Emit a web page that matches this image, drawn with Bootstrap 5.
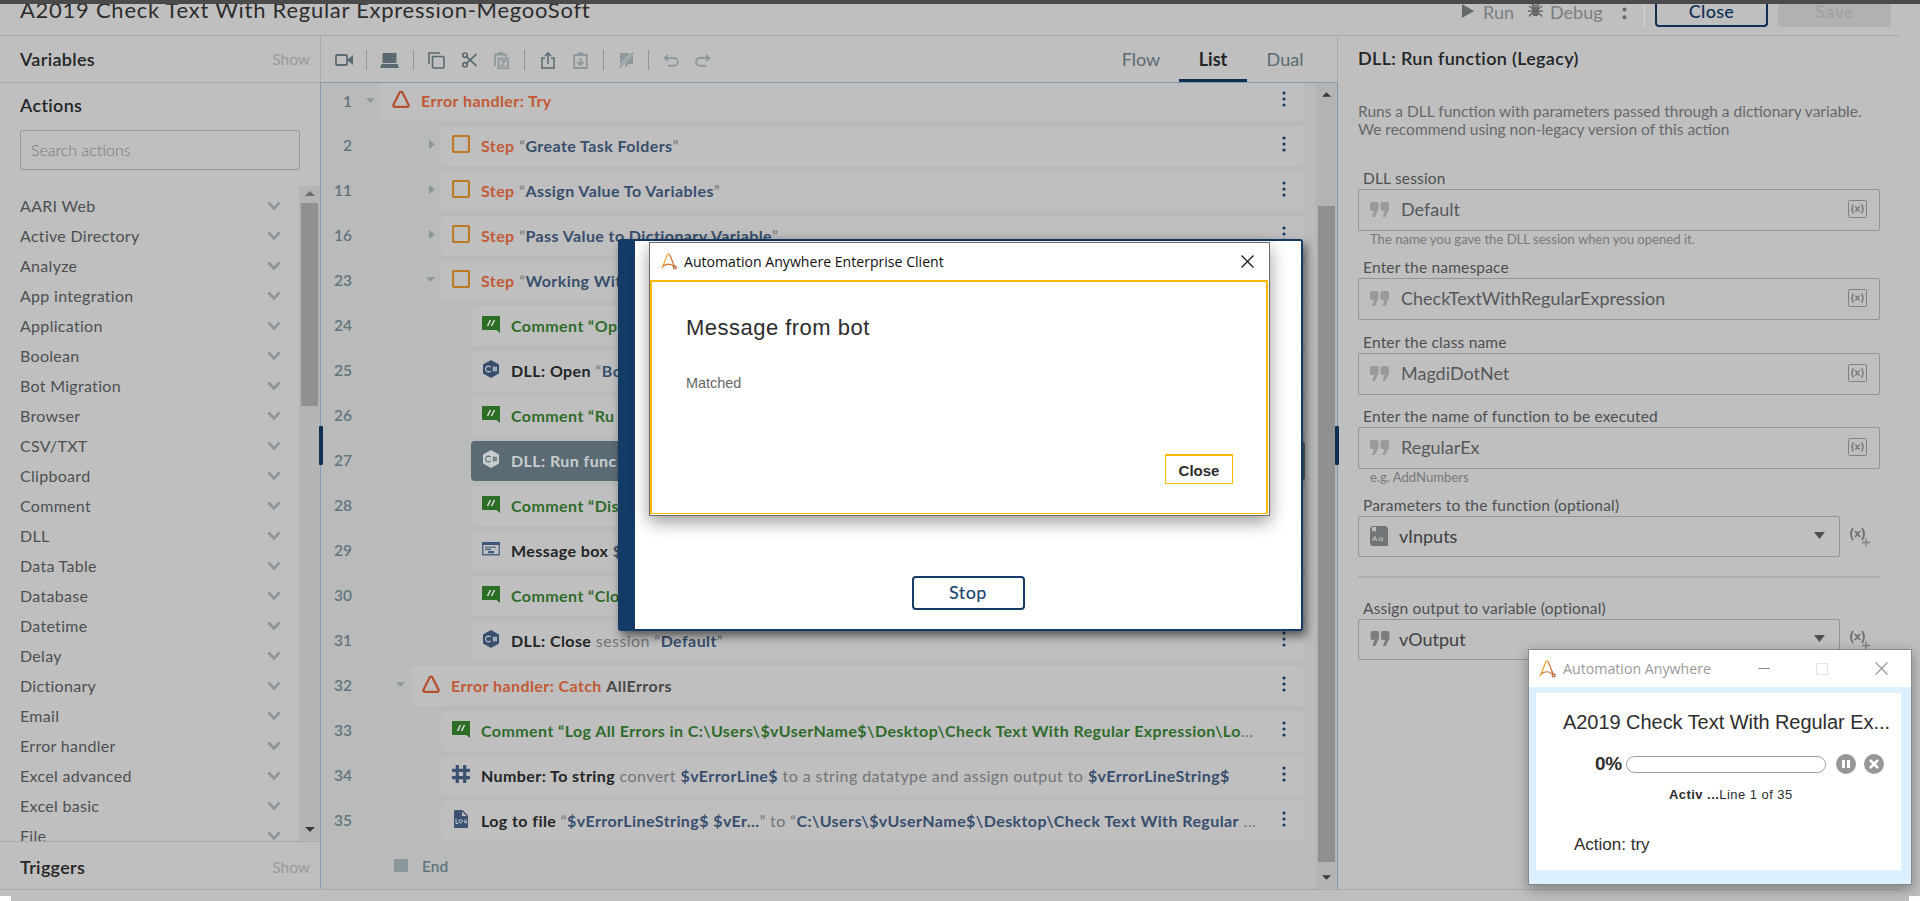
<!DOCTYPE html>
<html lang="en">
  <head>
    <meta charset="UTF-8" />
    <meta name="viewport" content="width=device-width, initial-scale=1.0" />
    <title>A2019 Check Text With Regular Expression-MegooSoft</title>
    <link
      href="https://cdn.jsdelivr.net/npm/bootstrap@5.3.3/dist/css/bootstrap.min.css"
      rel="stylesheet"
    />
    <style>
      body {
        width: 1920px;
        height: 901px;
        overflow: hidden;
        background: #bfbfbf;
        color: #4c5052;
        font-family: Lato, "Open Sans", sans-serif;
        font-size: 16px;
        line-height: 20px;
      }
      svg {
        display: block;
        flex: none;
      }

      /* header */
      .top-strip {
        height: 4px;
        background: #4a4a4a;
        z-index: 5;
      }
      .page-head {
        width: 1900px;
        height: 36px;
        border-bottom: 1px solid #a9abac;
        padding-left: 20px;
      }
      .bot-title {
        font-size: 22px;
        line-height: 19px;
        color: #2c2c2c;
        letter-spacing: 0.73px;
      }
      .head-tools {
        font-size: 18px;
        line-height: 24px;
        color: #7b7e80;
      }
      .head-btn {
        height: 27px;
        width: 113px;
        border: 2px solid #0f2f57;
        border-top: 0;
        border-radius: 0 0 4px 4px;
        text-align: center;
        color: #0f2f57;
        font-weight: 500;
        line-height: 22px;
        letter-spacing: 0.3px;
      }
      .head-btn.off {
        background: #b1b1b1;
        border-color: #b1b1b1;
        color: #a0a1a2;
      }

      /* left palette */
      .work {
        height: 854px;
        width: 1900px;
        border-bottom: 1px solid #a9abac;
      }
      .palette {
        width: 320px;
      }
      .pane-row {
        height: 47px;
        padding: 0 10px 0 20px;
      }
      .pane-title {
        font-size: 18px;
        font-weight: 600;
        letter-spacing: 0.32px;
        color: #232526;
      }
      .show-link {
        color: #969b9d;
        font-size: 15.5px;
      }
      .search-box {
        height: 40px;
        margin: 0 20px 16px;
        border: 1px solid #969899;
        border-radius: 2px;
        padding-left: 10px;
        color: #75787a;
        font-weight: 300;
        line-height: 38px;
      }
      .action-list {
        height: 655px;
        padding: 5px 0 0 20px;
        overflow: hidden;
      }
      .action-list div {
        height: 30px;
        padding-right: 18px;
        letter-spacing: 0.3px;
        display: flex;
        align-items: center;
        justify-content: space-between;
      }
      .line-b {
        border-bottom: 1px solid #a9abac;
      }
      .line-t {
        border-top: 1px solid #a9abac;
      }
      .track {
        flex: none;
        background: #b4b4b4;
      }
      .thumb {
        background: #909090;
      }

      /* centre editor */
      .editor {
        width: 1018px;
        border-left: 1px solid #a9abac;
        border-right: 1px solid #a9abac;
      }
      .toolbar {
        height: 47px;
        border-bottom: 1px solid #8299af;
        color: #5a6a72;
      }
      .toolbar i {
        width: 1px;
        height: 20px;
        background: #8c979c;
      }
      .toolbar > svg,
      .toolbar > i {
        margin-top: 2px !important;
      }
      .dim {
        color: #8f999d;
      }
      .view-tab {
        width: 68px;
        height: 46px;
        text-align: center;
        font-size: 18px;
        line-height: 46px;
      }
      .view-tab.on {
        color: #232526;
        font-weight: 700;
        border-bottom: 3px solid #0f2f57;
      }
      .canvas {
        height: 806px;
        margin-left: -1px;
        margin-right: -1px;
        border-left: 1px solid #8299af;
        border-right: 1px solid #8299af;
        background: #b8bbba;
      }
      .flow {
        width: 984px;
        overflow: hidden;
      }
      .line-row {
        height: 40px;
        margin-bottom: 5px;
        display: flex;
        align-items: center;
      }
      .line-row.first {
        height: 38px;
      }
      .line-row.first .step,
      .line-row.first .num {
        padding-bottom: 3px;
      }
      .num {
        width: 31px;
        text-align: right;
        font-size: 15.5px;
        color: #64747c;
        font-weight: 600;
        padding-bottom: 2px;
      }
      .twig {
        display: flex;
        justify-content: flex-end;
        align-items: center;
        padding-right: 6px;
        padding-bottom: 3px;
        color: #8c979c;
      }
      .d0 { width: 29px; }
      .d1 { width: 59px; }
      .d2 { width: 89px; }
      .d3 { width: 119px; }
      .step {
        height: 100%;
        flex: 1;
        min-width: 0;
        background: #bfbfbf;
        border-radius: 4px;
        display: flex;
        align-items: center;
        padding: 0 19px 1px 11px;
        color: #717476;
        letter-spacing: 0.42px;
        white-space: nowrap;
      }
      .step > svg:first-child {
        margin: -3px 11px 0 0;
      }
      .step > svg:last-child {
        margin: -3px 0 0 auto;
      }
      .step b {
        font-weight: 700;
      }
      .step.picked {
        background: #5b6b74;
        color: #c8cccd;
      }
      .c-dark { color: #232526; }
      .c-err { color: #c25a36; }
      .c-val { color: #384e6c; }
      .c-com { color: #2f6b2b; }
      .c-gray { color: #46494b; }
      .grip {
        width: 4px;
        height: 39px;
        top: 426px;
        background: #0f2f57;
        border-radius: 1px;
      }

      /* right property panel */
      .props {
        padding: 12px 0 0 20px;
      }
      .props-text {
        margin-top: 34px;
        line-height: 18px;
        font-size: 15.5px;
        color: #66696b;
      }
      .fld-label {
        padding-left: 5px;
        height: 20px;
        line-height: 18px;
        font-size: 15.5px;
        letter-spacing: 0.18px;
      }
      .fld {
        width: 522px;
        height: 42px;
        border: 1px solid #929495;
        border-radius: 2px;
        display: flex;
        align-items: center;
        padding: 0 12px 2px 11px;
        font-size: 18px;
        color: #55585a;
      }
      .fld.pick {
        width: 482px;
        height: 41px;
        padding-right: 14px;
        color: #3e4143;
      }
      .fld span {
        flex: 1;
      }
      .hint {
        padding-left: 12px;
        height: 18px;
        line-height: 16px;
        font-size: 13.1px;
        color: #77797b;
      }
      .sep {
        width: 522px;
        height: 2px;
        background: #adafb0;
      }

      /* run dialog and the windows above it */
      .run-dialog {
        left: 618px;
        top: 239px;
        width: 685px;
        height: 392px;
        background: #fff;
        border: 2px solid #143a66;
        border-left-width: 17px;
        border-radius: 3px;
        box-shadow: 3px 5px 10px rgba(0, 0, 0, 0.55);
        padding-bottom: 19px;
      }
      .stop-btn {
        width: 113px;
        height: 34px;
        border: 2px solid #143a66;
        border-radius: 4px;
        color: #24456f;
        font-size: 18px;
        font-weight: 500;
        line-height: 29px;
        letter-spacing: 0.4px;
        text-align: center;
      }
      .msg-window {
        left: 649px;
        top: 242px;
        width: 621px;
        height: 274px;
        background: #fff;
        border: 1px solid #6b6b6b;
        box-shadow: 0 6px 16px rgba(0, 0, 0, 0.4);
        color: #2d2d2d;
        font-family: "Liberation Sans", sans-serif;
      }
      .msg-bar {
        height: 37px;
        padding: 0 15px 0 11px;
        font-family: "Open Sans", sans-serif;
        font-size: 14.1px;
        color: #111;
      }
      .msg-body {
        height: 234px;
        margin-right: 1px;
        border: 2px solid #ffb900;
        border-bottom-width: 1px;
        padding: 34px 33px 0 34px;
      }
      .msg-title {
        font-size: 22px;
        line-height: 24px;
        letter-spacing: 0.48px;
      }
      .msg-text {
        margin-top: 34px;
        font-size: 14.4px;
        line-height: 18px;
        color: #5f6763;
      }
      .msg-close {
        width: 68px;
        height: 30px;
        border: 1px solid #ffb900;
        border-top-width: 2px;
        margin-top: 62px;
        font-size: 15px;
        font-weight: 700;
        line-height: 30px;
        text-align: center;
      }
      .bot-window {
        left: 1528px;
        top: 649px;
        width: 384px;
        height: 236px;
        background: #dcf0ff;
        border: 1px solid #8a8a8a;
        box-shadow: 0 4px 12px rgba(0, 0, 0, 0.35);
        font-family: "Liberation Sans", sans-serif;
        color: #2d2d2d;
      }
      .bot-bar {
        height: 37px;
        padding: 0 23px 0 10px;
        background: #fff;
        font-family: "Open Sans", sans-serif;
        font-size: 14.2px;
        color: #9a9a9a;
      }
      .bot-body {
        height: 177px;
        margin: 6px 10px 0 7px;
        background: #fff;
        padding-top: 18px;
      }
      .bot-name {
        padding-left: 27px;
        font-size: 20px;
        line-height: 22px;
        letter-spacing: -0.05px;
        white-space: nowrap;
      }
      .bot-bar-line {
        padding-left: 59px;
        margin-top: 20px;
        height: 22px;
      }
      .pct {
        width: 31px;
        font-size: 19px;
        font-weight: 700;
        letter-spacing: -0.2px;
      }
      .gauge {
        width: 200px;
        height: 17px;
        margin-right: 10px;
        border: 1px solid #9c9c9c;
        border-radius: 9px;
      }
      .bot-line {
        padding-left: 133px;
        margin-top: 10px;
        font-size: 13px;
        letter-spacing: 0.45px;
      }
      .bot-act {
        padding-left: 38px;
        margin-top: 30px;
        font-size: 17px;
      }
      .corner {
        width: 11px;
        height: 5px;
        bottom: 0;
        background: #fff;
      }
    </style>
  </head>
  <body class="position-relative">
    <!-- icon set -->
    <svg class="d-none">
      <symbol id="i-chev" viewBox="0 0 14 10"><path d="M1.5 1.5 7 7.500l5.500-6" fill="none" stroke="#8c9599" stroke-width="2.600" /></symbol>
      <symbol id="i-down" viewBox="0 0 10 5"><path d="M0 0h10L5 5z" fill="currentColor" /></symbol>
      <symbol id="i-up" viewBox="0 0 10 5"><path d="M0 5h10L5 0z" fill="currentColor" /></symbol>
      <symbol id="i-right" viewBox="0 0 6 9"><path d="M0 0v9l6-4.500z" fill="currentColor" /></symbol>
      <symbol id="i-dots" viewBox="0 0 4 16"><g fill="#1c3a5e"><circle cx="2" cy="2" r="1.600" /><circle cx="2" cy="8" r="1.600" /><circle cx="2" cy="14" r="1.600" /></g></symbol>
      <symbol id="i-tri" viewBox="0 0 18 18"><path d="M8 1.800h2l6.800 13.400-.8 1.600H2l-.8-1.600z" fill="none" stroke="#b5502f" stroke-width="2.200" stroke-linejoin="round" /></symbol>
      <symbol id="i-step" viewBox="0 0 18 18"><rect x="1" y="1" width="16" height="16" rx="1.500" fill="none" stroke="#bd7a26" stroke-width="2.200" /></symbol>
      <symbol id="i-com" viewBox="0 0 18 17"><path d="M0 0h18v17l-3.500-3H0z" fill="#2d6e27" /><path d="m8.500 4-3 6m7-6-3 6" stroke="#d5dcd4" stroke-width="1.600" /></symbol>
      <symbol id="i-dll" viewBox="0 0 18 18"><path d="m9 0 8 4.500v9L9 18l-8-4.500v-9z" fill="currentColor" /><path d="M8.600 7A2.900 2.900 0 1 0 8.600 11M11.800 6.500v5M14 6.500v5M10.600 8H15M10.600 10H15" fill="none" stroke="var(--cut, #c4cad2)" stroke-width="1.100" /></symbol>
      <symbol id="i-msg" viewBox="0 0 18 14"><path d="M.7.700h16.600v12H.7z" fill="none" stroke="#4c6384" stroke-width="1.400" /><path d="M0 0h18v3H0z" fill="#3f577a" /><path d="M3 5.200h11M3 7.400h6" stroke="#3f577a" stroke-width="1.100" /><path d="M6 9h6v2.200H6z" fill="#3f577a" /></symbol>
      <symbol id="i-hash" viewBox="0 0 18 18"><path d="M5.300 0v18M12.700 0v18M0 5.300h18M0 12.700h18" stroke="#3d5270" stroke-width="3.200" /></symbol>
      <symbol id="i-log" viewBox="0 0 18 18"><path d="M3 0h7.500L16 5.500V17a1 1 0 0 1-1 1H3a1 1 0 0 1-1-1V1a1 1 0 0 1 1-1z" fill="#3d5270" /><path d="M10 1.500V6h4.500z" fill="#bfbfbf" /><path d="M4 9v4.500h2" fill="none" stroke="#c8cdd4" /><circle cx="8.500" cy="11.300" r="1.600" fill="none" stroke="#c8cdd4" /><path d="M14.500 9.700a1.700 1.700 0 1 0 0 3.200v-1.400h-1.200" fill="none" stroke="#c8cdd4" /></symbol>
      <symbol id="i-quote" viewBox="0 0 19 15"><path d="M2 0h4.500a2 2 0 0 1 2 2v5.500L4.800 15H2L4 9H2a2 2 0 0 1-2-2V2a2 2 0 0 1 2-2zM12.500 0H17a2 2 0 0 1 2 2v5.500L15.300 15h-2.800l2-6h-2a2 2 0 0 1-2-2V2a2 2 0 0 1 2-2z" fill="currentColor" /></symbol>
      <symbol id="i-var" viewBox="0 0 19 18"><rect x=".5" y=".5" width="18" height="17" rx="1" fill="none" stroke="#7f8284" /><path d="M5.500 4.500Q2.500 9 5.500 13.500M13.500 4.500q3 4.500 0 9M7.300 6.500l4.400 5m0-5-4.400 5" fill="none" stroke="#7b7e80" stroke-width="1.600" /></symbol>
      <symbol id="i-varadd" viewBox="0 0 22 20"><path d="M4 1Q0 7 4 13M13 1q4 6 0 12M6 4l5 6m0-6-5 6" fill="none" stroke="#6f7274" stroke-width="1.900" /><path d="M17 11.500v8M13 15.500h8" stroke="#7b7e80" stroke-width="1.300" /></symbol>
      <symbol id="i-aa" viewBox="0 0 16 17"><path d="M1 15.500 6.500 1.500q1-1.500 2 0" fill="none" stroke="#f0a62e" stroke-width="1.200" /><path d="M8.500 1.300 13 12.500M2 13q6-4 11 .5" fill="none" stroke="#cf6a2a" stroke-width="1.100" /><circle cx="13.800" cy="14.500" r="1.400" fill="none" stroke="#b4541f" stroke-width="1.100" /></symbol>
      <symbol id="i-x" viewBox="0 0 12 12"><path d="m.5.500 11 11m0-11-11 11" stroke="currentColor" stroke-width="1.100" /></symbol>
    </svg>

    <div class="top-strip position-absolute top-0 start-0 w-100"></div>

    <header class="page-head d-flex align-items-start justify-content-between">
      <div class="bot-title">A2019 Check Text With Regular Expression-MegooSoft</div>
      <div class="head-tools d-flex">
        <svg style="margin: 4px 9px 0 0" width="12" height="14" viewBox="0 0 12 14"><path d="M0 0v14l12-7z" fill="#66696b" /></svg>
        <span style="margin-right: 14px">Run</span>
        <svg style="margin: 3px 7px 0 0" width="15" height="14" viewBox="0 0 15 14"><path d="M4 3.500h7V11l-1.500 2h-4L4 11z" fill="#66696b" /><path d="M4.500 0v2.500h6V0M1 3l3 2.500M14 3l-3 2.500M0 8h15M1 13.500 4 10m10 3.500L11 10" fill="none" stroke="#66696b" stroke-width="1.500" /></svg>
        <span style="width: 72px">Debug</span>
        <svg width="5" height="20" viewBox="0 0 5 20"><g fill="#66696b"><circle cx="2.500" cy="9.500" r="2" /><circle cx="2.500" cy="17.300" r="2" /></g></svg>
        <div class="border-end border-secondary-subtle opacity-50" style="width: 18px; height: 27px"></div>
        <div class="head-btn" style="margin: 0 10px">Close</div>
        <div class="head-btn off" style="margin-right: 9px">Save</div>
      </div>
    </header>

    <main class="work d-flex">
      <aside class="palette">
        <div class="pane-row line-b d-flex align-items-center justify-content-between">
          <span class="pane-title">Variables</span><span class="show-link">Show</span>
        </div>
        <div class="pane-row d-flex align-items-center pb-1"><span class="pane-title">Actions</span></div>
        <div class="search-box">Search actions</div>
        <div class="d-flex">
          <div class="action-list flex-fill">
            <div>AARI Web<svg width="14" height="10"><use href="#i-chev" /></svg></div>
            <div>Active Directory<svg width="14" height="10"><use href="#i-chev" /></svg></div>
            <div>Analyze<svg width="14" height="10"><use href="#i-chev" /></svg></div>
            <div>App integration<svg width="14" height="10"><use href="#i-chev" /></svg></div>
            <div>Application<svg width="14" height="10"><use href="#i-chev" /></svg></div>
            <div>Boolean<svg width="14" height="10"><use href="#i-chev" /></svg></div>
            <div>Bot Migration<svg width="14" height="10"><use href="#i-chev" /></svg></div>
            <div>Browser<svg width="14" height="10"><use href="#i-chev" /></svg></div>
            <div>CSV/TXT<svg width="14" height="10"><use href="#i-chev" /></svg></div>
            <div>Clipboard<svg width="14" height="10"><use href="#i-chev" /></svg></div>
            <div>Comment<svg width="14" height="10"><use href="#i-chev" /></svg></div>
            <div>DLL<svg width="14" height="10"><use href="#i-chev" /></svg></div>
            <div>Data Table<svg width="14" height="10"><use href="#i-chev" /></svg></div>
            <div>Database<svg width="14" height="10"><use href="#i-chev" /></svg></div>
            <div>Datetime<svg width="14" height="10"><use href="#i-chev" /></svg></div>
            <div>Delay<svg width="14" height="10"><use href="#i-chev" /></svg></div>
            <div>Dictionary<svg width="14" height="10"><use href="#i-chev" /></svg></div>
            <div>Email<svg width="14" height="10"><use href="#i-chev" /></svg></div>
            <div>Error handler<svg width="14" height="10"><use href="#i-chev" /></svg></div>
            <div>Excel advanced<svg width="14" height="10"><use href="#i-chev" /></svg></div>
            <div>Excel basic<svg width="14" height="10"><use href="#i-chev" /></svg></div>
            <div>File<svg width="14" height="10"><use href="#i-chev" /></svg></div>
          </div>
          <div class="track d-flex flex-column align-items-center" style="width: 21px">
            <svg width="10" height="5" style="margin: 5px 0 7px; color: #6b6b6b"><use href="#i-up" /></svg>
            <div class="thumb" style="width: 17px; height: 203px"></div>
            <svg class="mt-auto" width="10" height="5" style="margin-bottom: 9px; color: #3a3a3a"><use href="#i-down" /></svg>
          </div>
        </div>
        <div class="pane-row line-t d-flex align-items-center justify-content-between pt-1">
          <span class="pane-title">Triggers</span><span class="show-link">Show</span>
        </div>
      </aside>

      <section class="editor">
        <div class="toolbar d-flex align-items-center">
          <svg width="18" height="12" style="margin-left: 14px" viewBox="0 0 18 12"><rect x="1" y="1" width="11" height="10" rx="1" fill="none" stroke="currentColor" stroke-width="1.800" /><path d="m12 6 6-5v10z" fill="currentColor" /></svg>
          <i style="margin: 0 13px"></i>
          <svg width="19" height="15" viewBox="0 0 19 15"><path d="M2.500 0h14v10h-14zM1.500 11h16l1.500 4H0z" fill="currentColor" /></svg>
          <i style="margin: 0 14px"></i>
          <svg width="17" height="17" viewBox="0 0 17 17"><path d="M1 12V1h11" fill="none" stroke="currentColor" stroke-width="1.500" /><rect x="4.500" y="4.500" width="11.500" height="11.500" rx="1" fill="none" stroke="currentColor" stroke-width="1.600" /></svg>
          <svg width="15" height="16" style="margin-left: 17px" viewBox="0 0 15 16"><g fill="none" stroke="currentColor" stroke-width="1.700"><circle cx="3" cy="3.200" r="2.200" /><circle cx="3" cy="12.800" r="2.200" /><path d="M4.800 4.800 14.500 14M4.800 11.200 14.500 2" /></g></svg>
          <svg class="dim" width="15" height="17" style="margin-left: 17px" viewBox="0 0 15 17"><path d="M1 14V2.500h11V5M4 2.500C4 .5 9 .5 9 2.500M4.500 6.500h9.500v9.800H4.500z" fill="none" stroke="currentColor" stroke-width="1.800" /><path d="M7 9h4.500L7 13.700h4.500" fill="none" stroke="currentColor" stroke-width="1.400" /></svg>
          <i style="margin: 0 16px 0 15px"></i>
          <svg width="14" height="17" viewBox="0 0 14 17"><path d="M4 6H1v10h12V6h-3M7 12V1M4 4l3-3 3 3" fill="none" stroke="currentColor" stroke-width="1.500" /></svg>
          <svg class="dim" width="15" height="17" style="margin-left: 18px" viewBox="0 0 15 17"><path d="M1.200 3h12.600v13H1.200zM4.500 3c0-2.500 6-2.500 6 0M7.500 6v7M4.500 10l3 3 3-3" fill="none" stroke="currentColor" stroke-width="1.900" /></svg>
          <i style="margin: 0 15px"></i>
          <svg class="dim" width="15" height="16" viewBox="0 0 15 16"><path d="M1 1h10.500L1 12.500zM14 3v9h-4l-4 3.500V12z" fill="currentColor" /><path d="M14.500.500.500 15.500" stroke="currentColor" stroke-width="1.500" /></svg>
          <i style="margin: 0 14px"></i>
          <svg class="dim" width="16" height="13" viewBox="0 0 16 13"><path d="M2 4h9a3.800 3.800 0 0 1 0 7.800H5" fill="none" stroke="currentColor" stroke-width="1.900" /><path d="M5 0v8L0 4z" fill="currentColor" /></svg>
          <svg class="dim" width="16" height="13" style="margin-left: 16px" viewBox="0 0 16 13"><path d="M14 4H5a3.800 3.800 0 0 0 0 7.800h6" fill="none" stroke="currentColor" stroke-width="1.900" /><path d="M11 0v8l5-4z" fill="currentColor" /></svg>
          <div class="d-flex ms-auto" style="margin-right: 18px; gap: 4px">
            <div class="view-tab">Flow</div>
            <div class="view-tab on">List</div>
            <div class="view-tab">Dual</div>
          </div>
        </div>

        <div class="canvas d-flex justify-content-between">
          <div class="flow">
            <div class="line-row first"><div class="num">1</div><div class="twig d0"><svg width="9" height="5"><use href="#i-down" /></svg></div>
              <div class="step"><svg width="18" height="18"><use href="#i-tri" /></svg><b class="c-err">Error handler: Try</b><svg width="4" height="16"><use href="#i-dots" /></svg></div></div>
            <div class="line-row"><div class="num">2</div><div class="twig d2"><svg width="6" height="9"><use href="#i-right" /></svg></div>
              <div class="step"><svg width="18" height="18"><use href="#i-step" /></svg><span><b class="c-err">Step</b> “<b class="c-val">Greate Task Folders</b>”</span><svg width="4" height="16"><use href="#i-dots" /></svg></div></div>
            <div class="line-row"><div class="num">11</div><div class="twig d2"><svg width="6" height="9"><use href="#i-right" /></svg></div>
              <div class="step"><svg width="18" height="18"><use href="#i-step" /></svg><span><b class="c-err">Step</b> “<b class="c-val">Assign Value To Variables</b>”</span><svg width="4" height="16"><use href="#i-dots" /></svg></div></div>
            <div class="line-row"><div class="num">16</div><div class="twig d2"><svg width="6" height="9"><use href="#i-right" /></svg></div>
              <div class="step"><svg width="18" height="18"><use href="#i-step" /></svg><span><b class="c-err">Step</b> “<b class="c-val">Pass Value to Dictionary Variable</b>”</span><svg width="4" height="16"><use href="#i-dots" /></svg></div></div>
            <div class="line-row"><div class="num">23</div><div class="twig d2"><svg width="9" height="5"><use href="#i-down" /></svg></div>
              <div class="step"><svg width="18" height="18"><use href="#i-step" /></svg><span><b class="c-err">Step</b> “<b class="c-val">Working Wit</b></span></div></div>
            <div class="line-row"><div class="num">24</div><div class="twig d3"></div>
              <div class="step"><svg width="18" height="17"><use href="#i-com" /></svg><b class="c-com">Comment “Op</b></div></div>
            <div class="line-row"><div class="num">25</div><div class="twig d3"></div>
              <div class="step"><svg class="c-val" width="18" height="18"><use href="#i-dll" /></svg><span><b class="c-dark">DLL: Open</b> “<b class="c-val">Bo</b></span></div></div>
            <div class="line-row"><div class="num">26</div><div class="twig d3"></div>
              <div class="step"><svg width="18" height="17"><use href="#i-com" /></svg><b class="c-com">Comment “Ru</b></div></div>
            <div class="line-row"><div class="num">27</div><div class="twig d3"></div>
              <div class="step picked"><svg width="18" height="18" style="--cut: #5b6b74"><use href="#i-dll" /></svg><b>DLL: Run func</b></div></div>
            <div class="line-row"><div class="num">28</div><div class="twig d3"></div>
              <div class="step"><svg width="18" height="17"><use href="#i-com" /></svg><b class="c-com">Comment “Dis</b></div></div>
            <div class="line-row"><div class="num">29</div><div class="twig d3"></div>
              <div class="step"><svg width="18" height="14"><use href="#i-msg" /></svg><span><b class="c-dark">Message box</b> <b class="c-val">$</b></span></div></div>
            <div class="line-row"><div class="num">30</div><div class="twig d3"></div>
              <div class="step"><svg width="18" height="17"><use href="#i-com" /></svg><b class="c-com">Comment “Clo</b></div></div>
            <div class="line-row"><div class="num">31</div><div class="twig d3"></div>
              <div class="step"><svg class="c-val" width="18" height="18"><use href="#i-dll" /></svg><span><b class="c-dark">DLL: Close</b> session “<b class="c-val">Default</b>”</span><svg width="4" height="16"><use href="#i-dots" /></svg></div></div>
            <div class="line-row"><div class="num">32</div><div class="twig d1"><svg width="9" height="5"><use href="#i-down" /></svg></div>
              <div class="step"><svg width="18" height="18"><use href="#i-tri" /></svg><span><b class="c-err">Error handler: Catch</b> <b class="c-gray">AllErrors</b></span><svg width="4" height="16"><use href="#i-dots" /></svg></div></div>
            <div class="line-row"><div class="num">33</div><div class="twig d2"></div>
              <div class="step"><svg width="18" height="17"><use href="#i-com" /></svg><span><b class="c-com">Comment “Log All Errors in C:\Users\$vUserName$\Desktop\Check Text With Regular Expression\Lo</b>...</span><svg width="4" height="16"><use href="#i-dots" /></svg></div></div>
            <div class="line-row"><div class="num">34</div><div class="twig d2"></div>
              <div class="step"><svg width="18" height="18"><use href="#i-hash" /></svg><span><b class="c-dark">Number: To string</b> convert <b class="c-val">$vErrorLine$</b> to a string datatype and assign output to <b class="c-val">$vErrorLineString$</b></span><svg width="4" height="16"><use href="#i-dots" /></svg></div></div>
            <div class="line-row"><div class="num">35</div><div class="twig d2"></div>
              <div class="step"><svg width="18" height="18"><use href="#i-log" /></svg><span><b class="c-dark">Log to file</b> “<b class="c-val">$vErrorLineString$ $vEr...</b>” to “<b class="c-val">C:\Users\$vUserName$\Desktop\Check Text With Regular</b> ...</span><svg width="4" height="16"><use href="#i-dots" /></svg></div></div>
            <div class="line-row" style="padding-left: 73px">
              <div style="width: 14px; height: 13px; margin: -2px 14px 0 0; background: #8c979c"></div><b class="num text-start pb-0">End</b>
            </div>
          </div>
          <div class="track d-flex flex-column align-items-center" style="width: 21px">
            <svg width="9" height="5" style="margin: 9px 0 109px; color: #3a3a3a"><use href="#i-up" /></svg>
            <div class="thumb" style="width: 17px; height: 656px"></div>
            <svg class="mt-auto" width="9" height="5" style="margin-bottom: 9px; color: #3a3a3a"><use href="#i-down" /></svg>
          </div>
        </div>
      </section>

      <section class="props flex-fill">
        <div class="pane-title">DLL: Run function (Legacy)</div>
        <div class="props-text">Runs a DLL function with parameters passed through a dictionary variable.<br />We recommend using non-legacy version of this action</div>

        <div class="fld-label" style="margin-top: 31px">DLL session</div>
        <div class="fld"><svg width="19" height="15" style="margin-right: 12px; color: #989b9c"><use href="#i-quote" /></svg><span>Default</span><svg width="19" height="18"><use href="#i-var" /></svg></div>
        <div class="hint">The name you gave the DLL session when you opened it.</div>

        <div class="fld-label" style="margin-top: 9px">Enter the namespace</div>
        <div class="fld"><svg width="19" height="15" style="margin-right: 12px; color: #989b9c"><use href="#i-quote" /></svg><span>CheckTextWithRegularExpression</span><svg width="19" height="18"><use href="#i-var" /></svg></div>

        <div class="fld-label" style="margin-top: 13px">Enter the class name</div>
        <div class="fld"><svg width="19" height="15" style="margin-right: 12px; color: #989b9c"><use href="#i-quote" /></svg><span>MagdiDotNet</span><svg width="19" height="18"><use href="#i-var" /></svg></div>

        <div class="fld-label" style="margin-top: 12px">Enter the name of function to be executed</div>
        <div class="fld"><svg width="19" height="15" style="margin-right: 12px; color: #989b9c"><use href="#i-quote" /></svg><span>RegularEx</span><svg width="19" height="18"><use href="#i-var" /></svg></div>
        <div class="hint">e.g. AddNumbers</div>

        <div class="fld-label" style="margin-top: 9px">Parameters to the function (optional)</div>
        <div class="d-flex align-items-center">
          <div class="fld pick">
            <svg width="18" height="20" style="margin-right: 11px" viewBox="0 0 18 20"><path d="M2 0h14l2 2v18H2l-2-2V2z" fill="#727577" /><path d="M2 1h4v5L4 4.500 2 6z" fill="#bfbfbf" /><path d="m2.500 15 2.200-5L7 15M3.500 13.500H6" fill="none" stroke="#bfbfbf" /><circle cx="10.500" cy="13.300" r="1.600" fill="none" stroke="#bfbfbf" /><path d="M12.300 11.500V15" stroke="#bfbfbf" /></svg>
            <span>vInputs</span><svg width="11" height="7" viewBox="0 0 10 5" preserveAspectRatio="none" style="color: #4c4f51"><path d="M0 0h10L5 5z" fill="currentColor" /></svg>
          </div>
          <svg width="22" height="20" style="margin-left: 9px"><use href="#i-varadd" /></svg>
        </div>

        <div class="sep" style="margin: 19px 0 21px"></div>
        <div class="fld-label">Assign output to variable (optional)</div>
        <div class="d-flex align-items-center">
          <div class="fld pick">
            <svg width="20" height="15" style="margin-right: 9px; color: #7b7e80"><use href="#i-quote" /></svg>
            <span>vOutput</span><svg width="11" height="7" viewBox="0 0 10 5" preserveAspectRatio="none" style="color: #4c4f51"><path d="M0 0h10L5 5z" fill="currentColor" /></svg>
          </div>
          <svg width="22" height="20" style="margin-left: 9px"><use href="#i-varadd" /></svg>
        </div>
      </section>
    </main>

    <div class="grip position-absolute" style="left: 319px"></div>
    <div class="grip position-absolute" style="left: 1335px"></div>
    <div class="corner position-absolute start-0"></div>
    <div class="corner position-absolute end-0"></div>

    <!-- run dialog -->
    <div class="run-dialog position-absolute d-flex align-items-end justify-content-center">
      <div class="stop-btn">Stop</div>
    </div>

    <!-- message box -->
    <div class="msg-window position-absolute">
      <div class="msg-bar d-flex align-items-center">
        <svg width="16" height="17" style="margin-right: 7px"><use href="#i-aa" /></svg>
        <span class="flex-fill">Automation Anywhere Enterprise Client</span>
        <svg width="13" height="13"><use href="#i-x" /></svg>
      </div>
      <div class="msg-body">
        <div class="msg-title">Message from bot</div>
        <div class="msg-text">Matched</div>
        <div class="msg-close ms-auto">Close</div>
      </div>
    </div>

    <!-- bot progress window -->
    <div class="bot-window position-absolute">
      <div class="bot-bar d-flex align-items-center">
        <svg width="17" height="18" style="margin-right: 7px"><use href="#i-aa" /></svg>
        <span class="flex-fill">Automation Anywhere</span>
        <svg width="12" height="12" style="margin-right: 46px" viewBox="0 0 12 12"><path d="M0 5.500h12" stroke="#888" /></svg>
        <svg width="12" height="12" style="margin-right: 47px" viewBox="0 0 12 12"><path d="M.5.500h11v11H.5z" fill="none" stroke="#e2e2e2" /></svg>
        <svg width="13" height="13"><use href="#i-x" /></svg>
      </div>
      <div class="bot-body">
        <div class="bot-name">A2019 Check Text With Regular Ex...</div>
        <div class="bot-bar-line d-flex align-items-center">
          <span class="pct">0%</span>
          <div class="gauge"></div>
          <svg width="20" height="20" style="margin-right: 8px" viewBox="0 0 20 20"><circle cx="10" cy="10" r="10" fill="#979797" /><path d="M6 6h3v8H6zM11 6h3v8h-3z" fill="#fff" /></svg>
          <svg width="20" height="20" viewBox="0 0 20 20"><circle cx="10" cy="10" r="10" fill="#979797" /><path d="m6 6 8 8m0-8-8 8" stroke="#fff" stroke-width="2.500" /></svg>
        </div>
        <div class="bot-line"><b>Activ ...</b>Line 1 of 35</div>
        <div class="bot-act">Action: try</div>
      </div>
    </div>

    <script src="https://cdn.jsdelivr.net/npm/bootstrap@5.3.3/dist/js/bootstrap.bundle.min.js"></script>
  </body>
</html>
